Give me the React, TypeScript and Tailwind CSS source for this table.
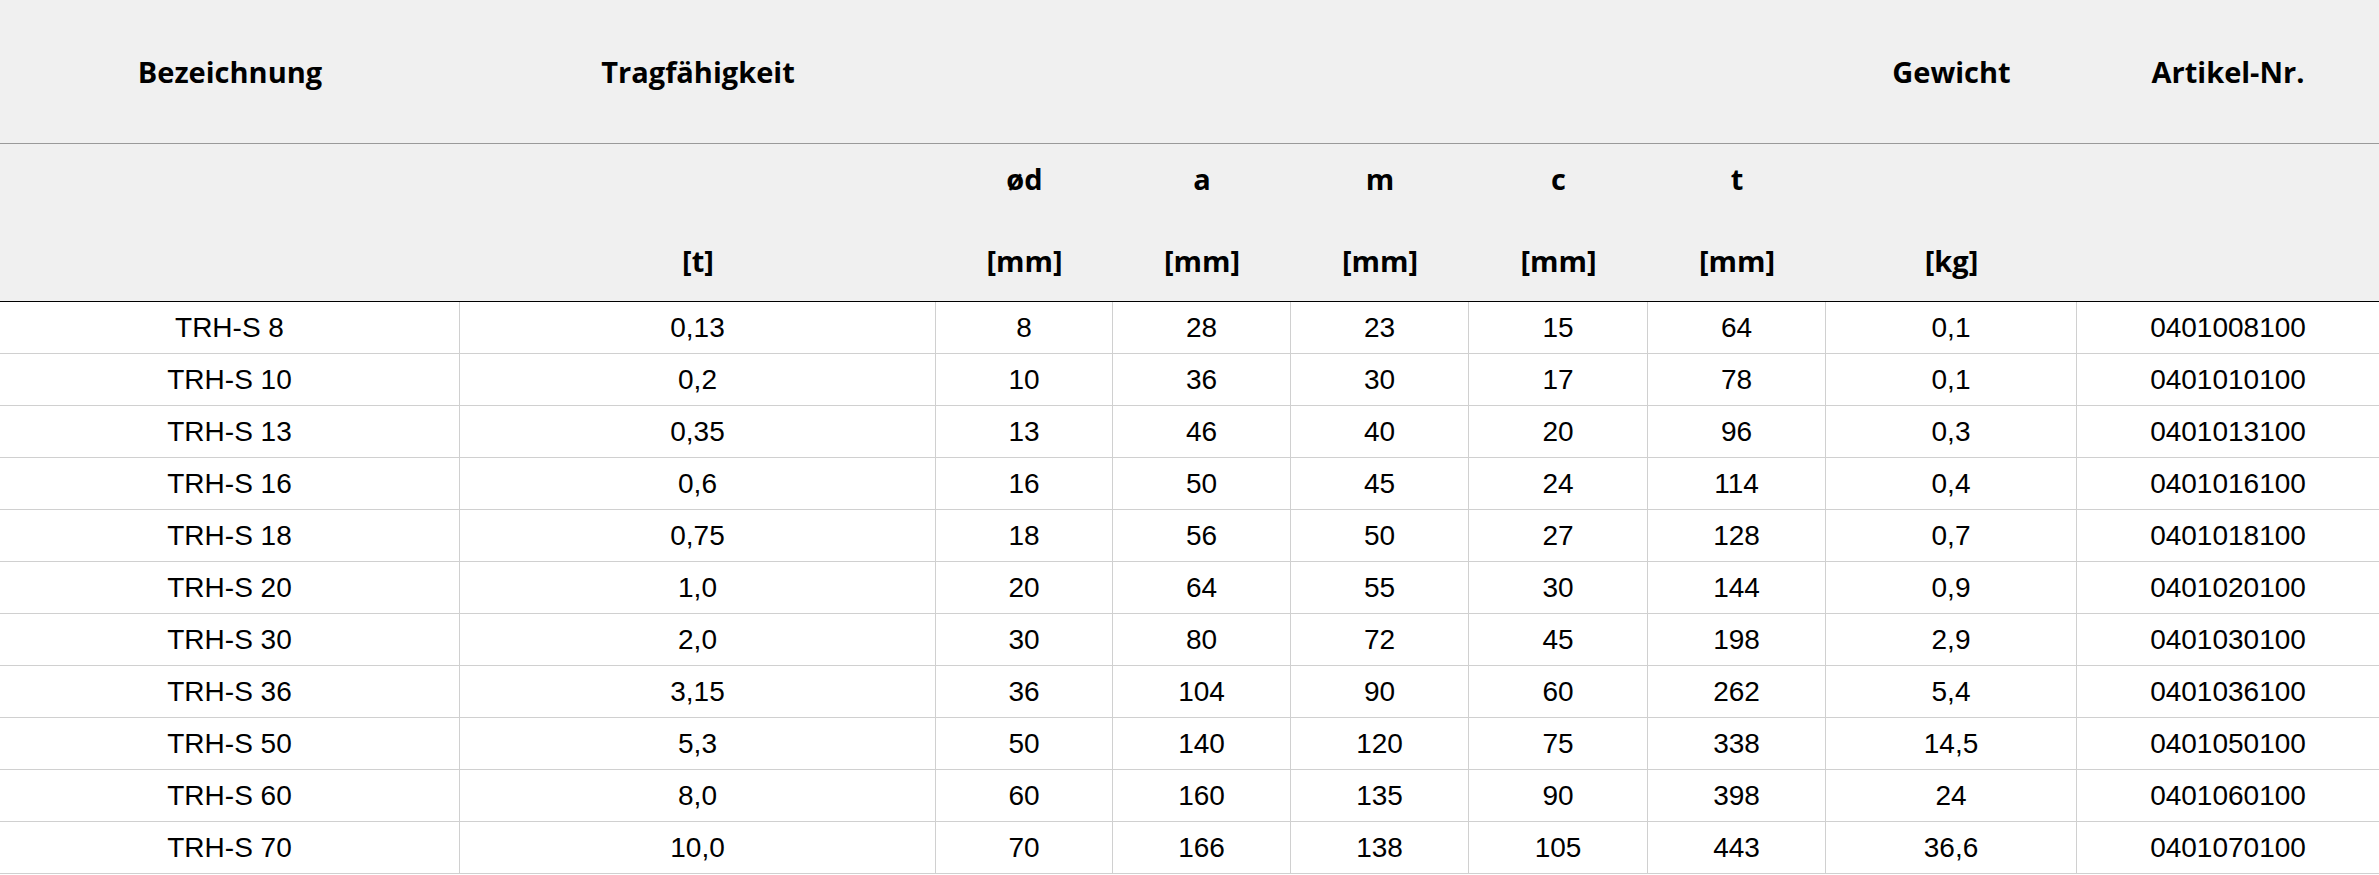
const rows = [
  ['TRH-S 8', '0,13', '8', '28', '23', '15', '64', '0,1', '0401008100'],
  ['TRH-S 10', '0,2', '10', '36', '30', '17', '78', '0,1', '0401010100'],
  ['TRH-S 13', '0,35', '13', '46', '40', '20', '96', '0,3', '0401013100'],
  ['TRH-S 16', '0,6', '16', '50', '45', '24', '114', '0,4', '0401016100'],
  ['TRH-S 18', '0,75', '18', '56', '50', '27', '128', '0,7', '0401018100'],
  ['TRH-S 20', '1,0', '20', '64', '55', '30', '144', '0,9', '0401020100'],
  ['TRH-S 30', '2,0', '30', '80', '72', '45', '198', '2,9', '0401030100'],
  ['TRH-S 36', '3,15', '36', '104', '90', '60', '262', '5,4', '0401036100'],
  ['TRH-S 50', '5,3', '50', '140', '120', '75', '338', '14,5', '0401050100'],
  ['TRH-S 60', '8,0', '60', '160', '135', '90', '398', '24', '0401060100'],
  ['TRH-S 70', '10,0', '70', '166', '138', '105', '443', '36,6', '0401070100'],
];

const cols = 'grid grid-cols-[460px_476px_177px_178px_178px_179px_178px_251px_1fr]';
const headFont = { fontFamily: '"Open Sans", sans-serif' };

const titles = ['Bezeichnung', 'Tragfähigkeit', '', '', '', '', '', 'Gewicht', 'Artikel-Nr.'];
const symbols = ['', '', 'ød', 'a', 'm', 'c', 't', '', ''];
const units = ['', '[t]', '[mm]', '[mm]', '[mm]', '[mm]', '[mm]', '[kg]', ''];

function HeadRow({ cells, className }: { cells: string[]; className: string }) {
  return (
    <div className={`${cols} ${className}`}>
      {cells.map((c, i) => (
        <div key={i} className="flex items-center justify-center text-[29px] font-bold text-black">
          {c}
        </div>
      ))}
    </div>
  );
}

export default function App() {
  return (
    <div className="min-h-[875px] w-[2379px] bg-white">
      <div className="bg-[#f0f0f0]" style={headFont}>
        <HeadRow cells={titles} className="h-[144px] border-b border-[#9a9a9a]" />
        <HeadRow cells={symbols} className="h-[70px]" />
        <HeadRow cells={units} className="h-[88px] pt-[6px] border-b border-black" />
      </div>
      <div style={{ fontFamily: '"Liberation Sans", Arial, sans-serif' }}>
        {rows.map((r) => (
          <div key={r[0]} className={`${cols} h-[52px] border-b border-[#d0d0d0]`}>
            {r.map((c, i) => (
              <div
                key={i}
                className={`flex items-center justify-center text-[28px] text-black ${i < 8 ? 'border-r border-[#d0d0d0]' : ''}`}
              >
                {c}
              </div>
            ))}
          </div>
        ))}
      </div>
    </div>
  );
}
